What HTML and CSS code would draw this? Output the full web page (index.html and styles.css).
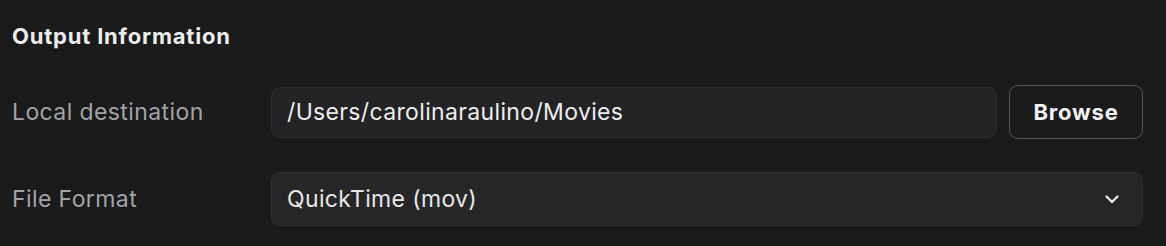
FILE: index.html
```html
<!DOCTYPE html>
<html lang="en">
<head>
  <meta charset="UTF-8">
  <meta name="viewport" content="width=device-width, initial-scale=1.0">
  <link rel="stylesheet" href="styles.css">
</head>
<body>

  <section class="output-panel">
    <h2 class="panel-title">Output Information</h2>

    <div class="field-row">
      <label class="field-label">Local destination</label>
      <div class="field-control">
        <div class="text-input">/Users/carolinaraulino/Movies</div>
        <button class="browse-btn">Browse</button>
      </div>
    </div>

    <div class="field-row format-row">
      <label class="field-label">File Format</label>
      <div class="field-control">
        <div class="select-input">
          <span>QuickTime (mov)</span>
          <svg class="chevron" width="16" height="16" viewBox="0 0 16 16">
            <path d="M2.5 5.5 L8 11 L13.5 5.5" fill="none" stroke="#ececec" stroke-width="2.4" stroke-linecap="round" stroke-linejoin="round"/>
          </svg>
        </div>
      </div>
    </div>
  </section>

</body>
</html>
```

FILE: styles.css
```css
body {
  margin: 0;
  background-color: #1a1a1b;
  font-family: 'Inter', 'Noto Sans', sans-serif;
  color: #e8e8e8;
}

.output-panel {
  padding: 22px 23px 0 12px;
}

.panel-title {
  margin: 0 0 35px 0;
  font-size: 22px;
  font-weight: 700;
  letter-spacing: 0.8px;
  line-height: 28px;
  color: #ececec;
}

.field-row {
  display: grid;
  grid-template-columns: 259px 1fr;
  align-items: center;
}

.format-row {
  margin-top: 33px;
}

.field-label {
  font-size: 23px;
  letter-spacing: 0.4px;
  color: #a3a3a6;
}

.field-control {
  display: flex;
  align-items: center;
  gap: 12px;
}

.text-input {
  flex: 1;
  height: 51px;
  box-sizing: border-box;
  padding: 0 15px;
  display: flex;
  align-items: center;
  background-color: #232325;
  border: 1px solid #2e2e31;
  border-radius: 9px;
  font-size: 23px;
  letter-spacing: 0.35px;
  color: #ededed;
}

.browse-btn {
  width: 134px;
  height: 54px;
  background-color: #1b1b1c;
  border: 1.5px solid #58585b;
  border-radius: 9px;
  font-family: inherit;
  font-size: 22px;
  font-weight: 700;
  letter-spacing: 0.8px;
  color: #f2f2f2;
}

.select-input {
  flex: 1;
  height: 54px;
  box-sizing: border-box;
  padding: 0 22px 0 15px;
  display: flex;
  align-items: center;
  justify-content: space-between;
  background-color: #262628;
  border: 1px solid #303033;
  border-radius: 9px;
  font-size: 23px;
  letter-spacing: 0.35px;
  color: #e6e6e6;
}
```
